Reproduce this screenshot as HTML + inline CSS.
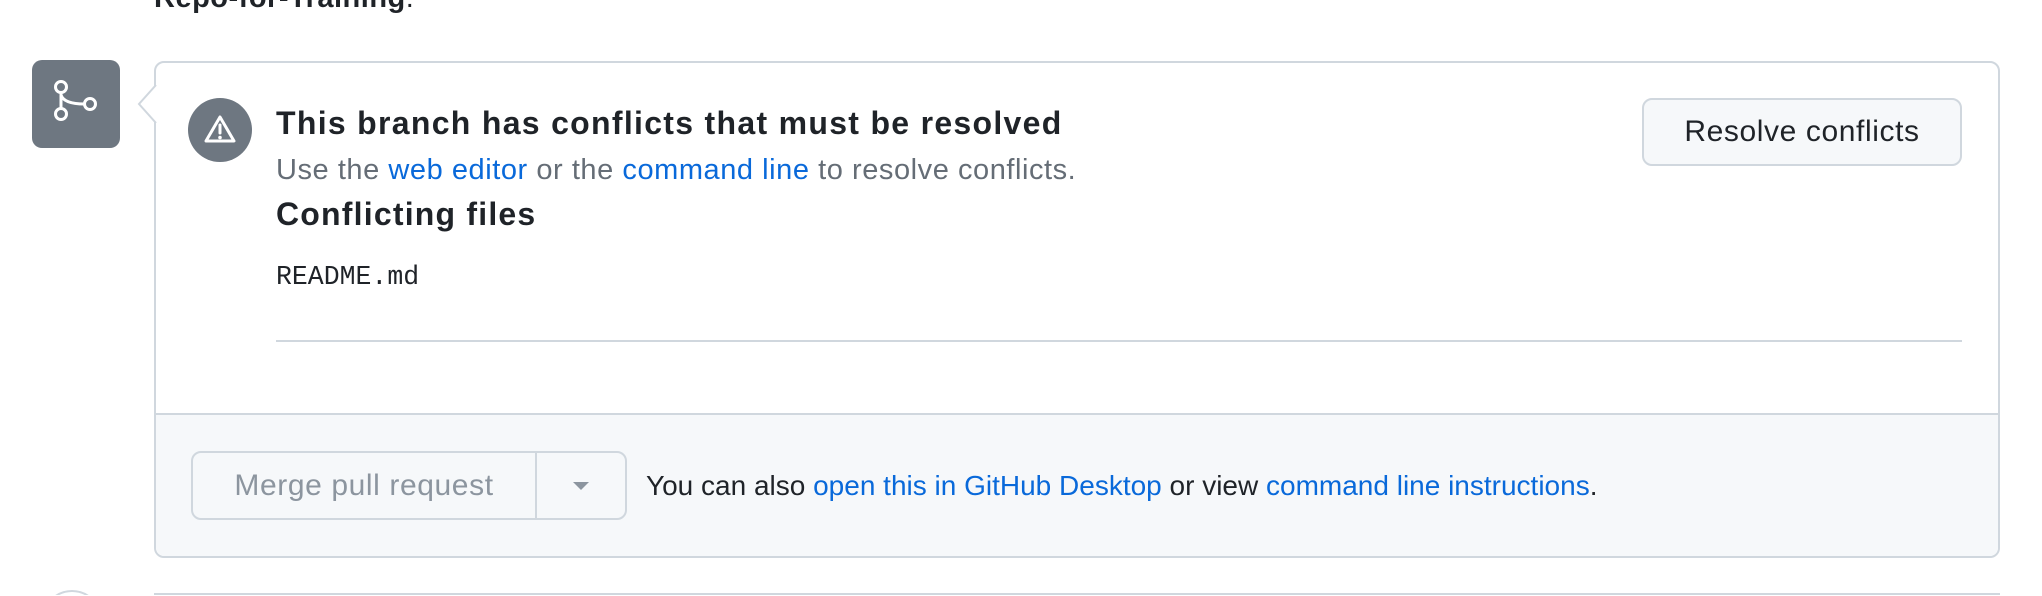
<!DOCTYPE html>
<html style="overflow:hidden;height:596px"><head><meta charset="utf-8"><style>
*{box-sizing:border-box;margin:0;padding:0}
html,body{width:2042px;height:596px;overflow:hidden}
body{background:#fff;font-family:"Liberation Sans",sans-serif;color:#1f2328;position:relative}
.a{position:absolute}
a{color:#0969da;text-decoration:none}
</style></head><body>
<div class="a" style="left:154px;top:0;height:14px;overflow:hidden;width:400px"><div style="margin-top:-17px;font-size:29px;font-weight:bold;line-height:30px;letter-spacing:0.5px;white-space:nowrap">Repo-for-Training<span style="font-weight:normal">.</span></div></div>

<div class="a" style="left:32px;top:60px;width:88px;height:88px;background:#6e7781;border-radius:10px">
<svg width="88" height="88" viewBox="0 0 88 88"><g fill="none" stroke="#fff" stroke-width="3"><circle cx="29" cy="27" r="5.5"/><circle cx="29" cy="54" r="5.5"/><circle cx="58" cy="44" r="5.5"/><path d="M29 32.5V48.5M29 35c2 6 10 9 23.5 9"/></g></svg>
</div>

<div class="a" style="left:154px;top:61px;width:1846px;height:497px;border:2px solid #d0d7de;border-radius:10px;background:#fff"></div>
<svg class="a" style="left:137px;top:85px" width="20" height="40" viewBox="0 0 20 40"><path d="M19 0 L2 19 L19 38" fill="#fff" stroke="#d0d7de" stroke-width="2"/></svg>

<div class="a" style="left:188px;top:98px;width:64px;height:64px;border-radius:50%;background:#6e7781">
<svg width="64" height="64" viewBox="0 0 64 64"><path d="M32 19 L46 43 H18 Z" fill="none" stroke="#fff" stroke-width="3" stroke-linejoin="round"/><path d="M32 27V35" stroke="#fff" stroke-width="3" stroke-linecap="round"/><circle cx="32" cy="39.5" r="1.8" fill="#fff"/></svg>
</div>

<div class="a" style="left:276px;top:103px;font-size:32px;font-weight:bold;line-height:40px;white-space:nowrap;letter-spacing:1.3px">This branch has conflicts that must be resolved</div>
<div class="a" style="left:276px;top:153px;font-size:29px;line-height:34px;color:#656d76;white-space:nowrap;letter-spacing:0.55px">Use the <a>web editor</a> or the <a>command line</a> to resolve conflicts.</div>
<div class="a" style="left:276px;top:194px;font-size:32px;font-weight:bold;line-height:40px;white-space:nowrap;letter-spacing:1.2px">Conflicting files</div>
<div class="a" style="left:276px;top:261px;font-family:'Liberation Mono',monospace;font-size:26.5px;line-height:32px">README.md</div>
<div class="a" style="left:276px;top:340px;width:1686px;height:2px;background:#d0d7de"></div>

<div class="a" style="left:1642px;top:98px;width:320px;height:68px;border:2px solid #d0d7de;border-radius:10px;background:#f6f8fa;font-size:30px;line-height:64px;text-align:center;letter-spacing:0.6px">Resolve conflicts</div>

<div class="a" style="left:156px;top:413px;width:1842px;height:143px;background:#f6f8fa;border-top:2px solid #d0d7de;border-radius:0 0 9px 9px"></div>

<div class="a" style="left:191px;top:451px;width:436px;height:69px;border:2px solid #d0d7de;border-radius:10px;background:#f6f8fa"></div>
<div class="a" style="left:535px;top:452px;width:2px;height:67px;background:#d0d7de"></div>
<div class="a" style="left:193px;top:453px;width:342px;height:65px;line-height:65px;text-align:center;font-size:30px;letter-spacing:0.6px;color:#8c959f">Merge pull request</div>
<svg class="a" style="left:573px;top:482px" width="16" height="10" viewBox="0 0 16 10"><path d="M0 0H16L8 8Z" fill="#8c959f"/></svg>

<div class="a" style="left:646px;top:469px;font-size:28px;line-height:34px;white-space:nowrap">You can also <a>open this in GitHub Desktop</a> or view <a>command line instructions</a>.</div>

<div class="a" style="left:154px;top:593px;width:1846px;height:2px;background:#d0d7de"></div>
<div class="a" style="left:42px;top:590px;width:60px;height:5px;overflow:hidden"><div style="width:60px;height:60px;border-radius:50%;border:2px solid #d0d7de"></div></div>
</body></html>
